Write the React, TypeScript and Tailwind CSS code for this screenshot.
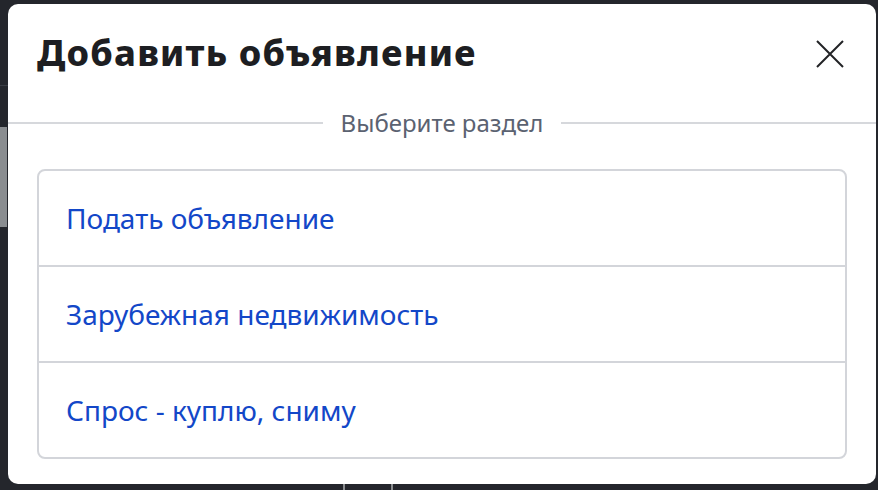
import React from 'react';

const items = ['Подать объявление', 'Зарубежная недвижимость', 'Спрос - куплю, сниму'];

export default function App() {
  return (
    <div className="relative h-[490px] w-[878px] overflow-hidden bg-[#24262c] pt-[4px] pl-[8px] pr-[2px] pb-[6px]">
      {/* page behind the backdrop */}
      <div className="absolute left-0 top-[85px] h-px w-[8px] bg-[#3a3d44]" />
      <div className="absolute left-0 top-[127px] h-[100px] w-[7px] bg-[#8a8d90]" />
      <div className="absolute left-[343px] bottom-0 h-[6px] w-[2px] bg-[#8a8d90]" />
      <div className="absolute left-[391px] bottom-0 h-[6px] w-[2px] bg-[#8a8d90]" />

      {/* Modal */}
      <div className="relative flex h-[480px] w-[868px] flex-col rounded-[10px] bg-white" style={{ fontFamily: '"Noto Sans", "Open Sans", sans-serif' }}>
        <div className="flex h-[91px] items-start justify-between pl-[29px] pr-[32px] pt-[27px]">
          <h1 className="text-[36px] font-extrabold leading-[44px] tracking-[1.2px] text-[#1d1e22]">Добавить объявление</h1>
          <button className="mt-[9px] flex h-[28px] w-[28px] items-center justify-center text-[#222326]">
            <svg width="28" height="28" viewBox="0 0 28 28" fill="none" stroke="currentColor" strokeWidth="2">
              <path d="M1 1L27 27M27 1L1 27" />
            </svg>
          </button>
        </div>

        <div className="flex h-[56px] items-center">
          <div className="h-[2px] flex-1 bg-[#d6d8dc]" />
          <span className="px-[18px] text-[24px] leading-[30px] text-[#5b6271]">Выберите раздел</span>
          <div className="h-[2px] flex-1 bg-[#d6d8dc]" />
        </div>

        <div className="mx-[29px] mt-[18px] flex flex-col overflow-hidden rounded-[8px] border-2 border-[#d3d5da]">
          {items.map((t, i) => (
            <div
              key={t}
              className={`flex items-center px-[27px] text-[28px] text-[#1347c8] ${i > 0 ? 'h-[96px] border-t-2 border-[#d3d5da]' : 'h-[94px]'}`}
            >
              {t}
            </div>
          ))}
        </div>
      </div>
    </div>
  );
}
